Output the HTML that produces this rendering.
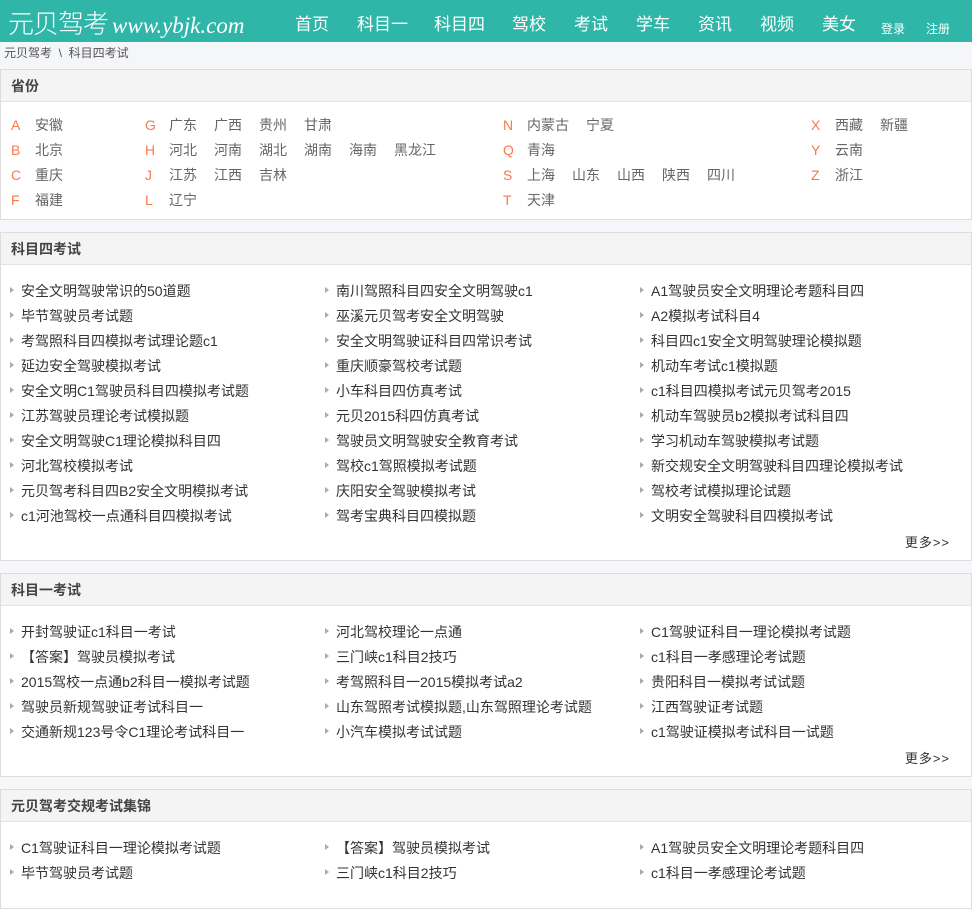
<!DOCTYPE html>
<html><head><meta charset="utf-8"><style>
*{margin:0;padding:0;box-sizing:border-box}
body{width:972px;height:884px;overflow:hidden;background:#f5f6fa;font-family:"Liberation Sans","Noto Sans CJK SC",sans-serif;font-size:14px;color:#333}
.hd{height:42px;background:#2fb6a8;position:relative;color:#fff}
.logo{position:absolute;left:8px;top:4px;font-size:26px;font-family:"Noto Sans CJK SC",sans-serif;font-weight:300;letter-spacing:-1px}
.logo i{font-family:"Liberation Serif",serif;font-size:23px;margin-left:4px;letter-spacing:0}
.nav{position:absolute;top:10px;left:0;font-size:17px}
.nav span{position:absolute;white-space:nowrap}
.sm{position:absolute;top:20px;font-size:12px}
.bc{height:27px;line-height:22px;font-size:12px;color:#555;padding-left:4px}
.box{background:#fff;border:1px solid #ddd;position:absolute;left:0;width:972px}
.box h3{height:32px;line-height:32px;background:#f4f4f4;border-bottom:1px solid #e2e2e2;font-size:14px;color:#444;padding-left:10px;font-weight:bold}
.pr{position:absolute;white-space:nowrap;color:#666}
.pr b{font-weight:normal;color:#f77a4a;display:inline-block;width:24px}
.pr span{margin-right:17px}
.li{position:absolute;white-space:nowrap;color:#333;font-size:14px}
.li:before{content:"";position:absolute;left:-11px;top:6px;border-left:4px solid #aaa;border-top:3px solid transparent;border-bottom:3px solid transparent}
.more{position:absolute;right:21px;font-size:13px;color:#333;letter-spacing:1px}
</style></head><body>
<div class="hd">
<div class="logo">元贝驾考<i>www.ybjk.com</i></div>
<div class="nav">
<span style="left:295px">首页</span><span style="left:357px">科目一</span><span style="left:434px">科目四</span><span style="left:512px">驾校</span><span style="left:574px">考试</span><span style="left:636px">学车</span><span style="left:698px">资讯</span><span style="left:760px">视频</span><span style="left:822px">美女</span>
</div>
<span class="sm" style="left:881px">登录</span><span class="sm" style="left:926px">注册</span>
</div>
<div class="bc">元贝驾考 &nbsp;\ &nbsp;科目四考试</div>

<div class="box" style="top:69px;height:151px"><h3>省份</h3>
<div class="pr" style="left:10px;top:45px"><b>A</b><span>安徽</span></div>
<div class="pr" style="left:10px;top:70px"><b>B</b><span>北京</span></div>
<div class="pr" style="left:10px;top:95px"><b>C</b><span>重庆</span></div>
<div class="pr" style="left:10px;top:120px"><b>F</b><span>福建</span></div>
<div class="pr" style="left:144px;top:45px"><b>G</b><span>广东</span><span>广西</span><span>贵州</span><span>甘肃</span></div>
<div class="pr" style="left:144px;top:70px"><b>H</b><span>河北</span><span>河南</span><span>湖北</span><span>湖南</span><span>海南</span><span>黑龙江</span></div>
<div class="pr" style="left:144px;top:95px"><b>J</b><span>江苏</span><span>江西</span><span>吉林</span></div>
<div class="pr" style="left:144px;top:120px"><b>L</b><span>辽宁</span></div>
<div class="pr" style="left:502px;top:45px"><b>N</b><span>内蒙古</span><span>宁夏</span></div>
<div class="pr" style="left:502px;top:70px"><b>Q</b><span>青海</span></div>
<div class="pr" style="left:502px;top:95px"><b>S</b><span>上海</span><span>山东</span><span>山西</span><span>陕西</span><span>四川</span></div>
<div class="pr" style="left:502px;top:120px"><b>T</b><span>天津</span></div>
<div class="pr" style="left:810px;top:45px"><b>X</b><span>西藏</span><span>新疆</span></div>
<div class="pr" style="left:810px;top:70px"><b>Y</b><span>云南</span></div>
<div class="pr" style="left:810px;top:95px"><b>Z</b><span>浙江</span></div>
</div>

<div class="box" style="top:232px;height:329px"><h3>科目四考试</h3>
<div class="li" style="left:20px;top:48px">安全文明驾驶常识的50道题</div><div class="li" style="left:335px;top:48px">南川驾照科目四安全文明驾驶c1</div><div class="li" style="left:650px;top:48px">A1驾驶员安全文明理论考题科目四</div>
<div class="li" style="left:20px;top:73px">毕节驾驶员考试题</div><div class="li" style="left:335px;top:73px">巫溪元贝驾考安全文明驾驶</div><div class="li" style="left:650px;top:73px">A2模拟考试科目4</div>
<div class="li" style="left:20px;top:98px">考驾照科目四模拟考试理论题c1</div><div class="li" style="left:335px;top:98px">安全文明驾驶证科目四常识考试</div><div class="li" style="left:650px;top:98px">科目四c1安全文明驾驶理论模拟题</div>
<div class="li" style="left:20px;top:123px">延边安全驾驶模拟考试</div><div class="li" style="left:335px;top:123px">重庆顺豪驾校考试题</div><div class="li" style="left:650px;top:123px">机动车考试c1模拟题</div>
<div class="li" style="left:20px;top:148px">安全文明C1驾驶员科目四模拟考试题</div><div class="li" style="left:335px;top:148px">小车科目四仿真考试</div><div class="li" style="left:650px;top:148px">c1科目四模拟考试元贝驾考2015</div>
<div class="li" style="left:20px;top:173px">江苏驾驶员理论考试模拟题</div><div class="li" style="left:335px;top:173px">元贝2015科四仿真考试</div><div class="li" style="left:650px;top:173px">机动车驾驶员b2模拟考试科目四</div>
<div class="li" style="left:20px;top:198px">安全文明驾驶C1理论模拟科目四</div><div class="li" style="left:335px;top:198px">驾驶员文明驾驶安全教育考试</div><div class="li" style="left:650px;top:198px">学习机动车驾驶模拟考试题</div>
<div class="li" style="left:20px;top:223px">河北驾校模拟考试</div><div class="li" style="left:335px;top:223px">驾校c1驾照模拟考试题</div><div class="li" style="left:650px;top:223px">新交规安全文明驾驶科目四理论模拟考试</div>
<div class="li" style="left:20px;top:248px">元贝驾考科目四B2安全文明模拟考试</div><div class="li" style="left:335px;top:248px">庆阳安全驾驶模拟考试</div><div class="li" style="left:650px;top:248px">驾校考试模拟理论试题</div>
<div class="li" style="left:20px;top:273px">c1河池驾校一点通科目四模拟考试</div><div class="li" style="left:335px;top:273px">驾考宝典科目四模拟题</div><div class="li" style="left:650px;top:273px">文明安全驾驶科目四模拟考试</div>
<div class="more" style="top:299px">更多&gt;&gt;</div>
</div>

<div class="box" style="top:573px;height:204px"><h3>科目一考试</h3>
<div class="li" style="left:20px;top:48px">开封驾驶证c1科目一考试</div><div class="li" style="left:335px;top:48px">河北驾校理论一点通</div><div class="li" style="left:650px;top:48px">C1驾驶证科目一理论模拟考试题</div>
<div class="li" style="left:20px;top:73px">【答案】驾驶员模拟考试</div><div class="li" style="left:335px;top:73px">三门峡c1科目2技巧</div><div class="li" style="left:650px;top:73px">c1科目一孝感理论考试题</div>
<div class="li" style="left:20px;top:98px">2015驾校一点通b2科目一模拟考试题</div><div class="li" style="left:335px;top:98px">考驾照科目一2015模拟考试a2</div><div class="li" style="left:650px;top:98px">贵阳科目一模拟考试试题</div>
<div class="li" style="left:20px;top:123px">驾驶员新规驾驶证考试科目一</div><div class="li" style="left:335px;top:123px">山东驾照考试模拟题,山东驾照理论考试题</div><div class="li" style="left:650px;top:123px">江西驾驶证考试题</div>
<div class="li" style="left:20px;top:148px">交通新规123号令C1理论考试科目一</div><div class="li" style="left:335px;top:148px">小汽车模拟考试试题</div><div class="li" style="left:650px;top:148px">c1驾驶证模拟考试科目一试题</div>
<div class="more" style="top:174px">更多&gt;&gt;</div>
</div>

<div class="box" style="top:789px;height:120px"><h3>元贝驾考交规考试集锦</h3>
<div class="li" style="left:20px;top:48px">C1驾驶证科目一理论模拟考试题</div><div class="li" style="left:335px;top:48px">【答案】驾驶员模拟考试</div><div class="li" style="left:650px;top:48px">A1驾驶员安全文明理论考题科目四</div>
<div class="li" style="left:20px;top:73px">毕节驾驶员考试题</div><div class="li" style="left:335px;top:73px">三门峡c1科目2技巧</div><div class="li" style="left:650px;top:73px">c1科目一孝感理论考试题</div>
</div>
</body></html>
